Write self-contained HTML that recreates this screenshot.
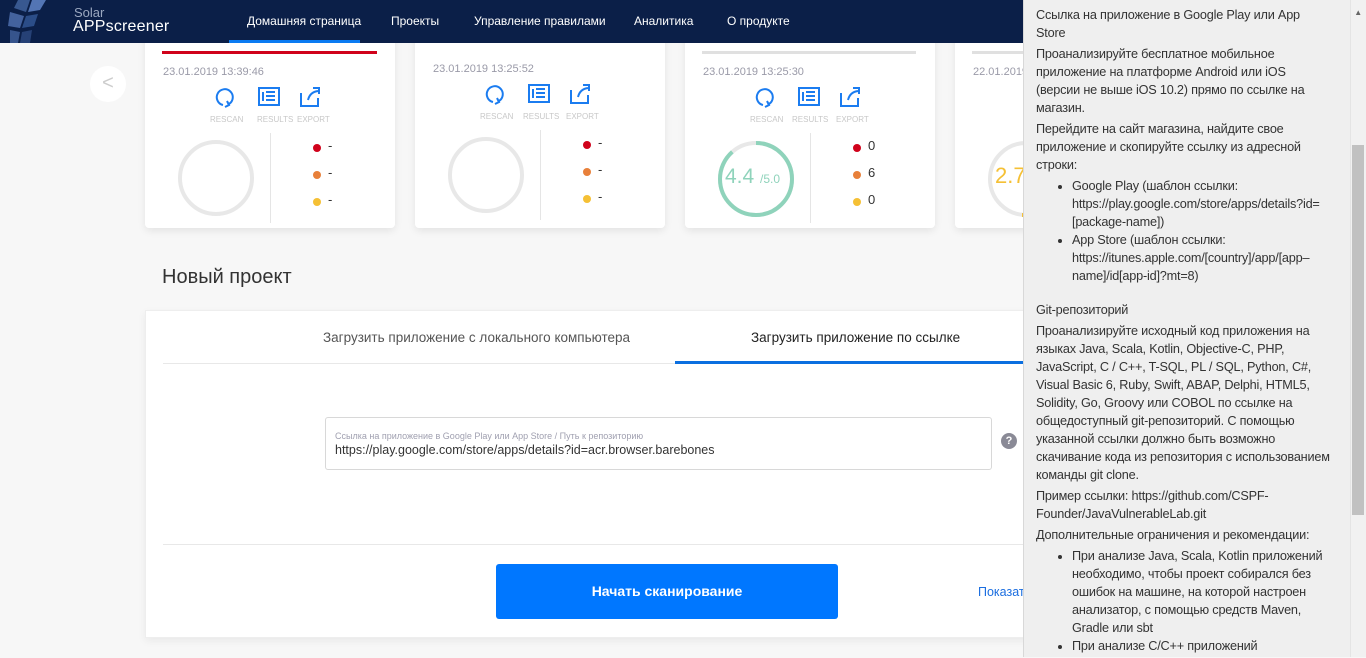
<!DOCTYPE html>
<html><head><meta charset="utf-8"><style>
*{box-sizing:border-box;margin:0;padding:0}
body{width:1366px;height:657px;overflow:hidden;background:#f7f7f7;font-family:"Liberation Sans",sans-serif;position:relative;color:#333}
.hdr{position:absolute;left:0;top:0;width:1366px;height:43px;background:#0b1f48;z-index:5}
.nav{position:absolute;top:14px;color:#fff;font-size:12px}
.card{position:absolute;top:20px;width:250px;height:208px;background:#fff;border-radius:4px;box-shadow:0 3px 8px rgba(0,0,0,.08)}
.date{position:absolute;left:18px;top:45px;font-size:11px;color:#9a9aa8}
.lbl{position:absolute;top:95px;font-size:8px;color:#c8c8c8}
.ic{position:absolute;top:65px}
.vd{position:absolute;left:125px;top:113px;width:1px;height:90px;background:#e5e5e5}
.dot{position:absolute;left:168px;width:8px;height:8px;border-radius:50%}
.dv{position:absolute;left:183px;font-size:13px;color:#333}
.panel{position:absolute;left:1023px;top:0;width:343px;height:657px;background:#efefef;border-left:1px solid #d8d8d8;font-size:12.7px;letter-spacing:-0.2px;line-height:18px;color:#333;z-index:10}
.panel .in{position:absolute;left:12px;top:6px;width:294px}
.panel p{margin-bottom:3px}
.panel ul{margin-left:36px;margin-bottom:3px}
</style></head><body>
<div class="hdr">
<svg width="70" height="43" style="position:absolute;left:0;top:0"><g fill="#3d5f98" opacity=".9"><path d="M18 0 L30 0 L26 12 L14 8Z"/><path d="M32 0 L46 0 L40 10 L28 12Z" fill="#5b7fc0"/><path d="M10 12 L24 16 L20 28 L8 26Z" fill="#4a6aa8"/><path d="M26 16 L38 14 L34 26 L22 28Z" fill="#2f5390"/><path d="M10 30 L20 32 L18 43 L10 43Z" fill="#3b5a94"/><path d="M22 32 L32 30 L30 43 L20 43Z" fill="#29457c"/></g></svg>
<div style="position:absolute;left:74px;top:5px;color:#9ba8c0;font-size:13px">Solar</div>
<div style="position:absolute;left:73px;top:18px;color:#fff;font-size:16px;letter-spacing:.2px">APPscreener</div>
<div class="nav" style="left:247px">Домашняя страница</div>
<div class="nav" style="left:391px">Проекты</div>
<div class="nav" style="left:474px">Управление правилами</div>
<div class="nav" style="left:634px">Аналитика</div>
<div class="nav" style="left:727px">О продукте</div>
<div style="position:absolute;left:229px;top:40px;width:131px;height:3px;background:#0b7bf2"></div>
</div>
<div style="position:absolute;left:90px;top:66px;width:36px;height:36px;border-radius:50%;background:#fff;color:#ccc;font-size:20px;text-align:center;line-height:34px">&lt;</div>

<div class="card" style="left:145px">
<div style="position:absolute;left:17px;top:31px;width:215px;height:3px;background:#d0021b"></div>
<div class="date" style="top:46px">23.01.2019 13:39:46</div>
<svg class="ic" style="left:68px" width="120" height="26"><g fill="none" stroke="#1b7cf0" stroke-width="2"><path d="M10 20 A8 8 0 1 1 16 19"/><path d="M14 16 L16 20 L12 22"/><rect x="46" y="3" width="20" height="17"/><path d="M50 7v9M53 7h9M53 11h9M53 15h9"/><path d="M88 8v13h17v-8M95 15q2-8 10-9M100 3h6v6"/></g></svg>
<div class="lbl" style="left:65px">RESCAN</div><div class="lbl" style="left:112px">RESULTS</div><div class="lbl" style="left:152px">EXPORT</div>
<div style="position:absolute;left:33px;top:120px;width:76px;height:76px;border:4px solid #e8e8e8;border-radius:50%"></div>
<div class="vd"></div>
<div class="dot" style="top:124px;background:#d0021b"></div><div class="dv" style="top:118px">-</div>
<div class="dot" style="top:151px;background:#e8803a"></div><div class="dv" style="top:145px">-</div>
<div class="dot" style="top:178px;background:#f5c035"></div><div class="dv" style="top:172px">-</div>
</div>
<div class="card" style="left:415px">
<div class="date" style="top:43px">23.01.2019 13:25:52</div>
<svg class="ic" style="left:68px;top:62px" width="120" height="26"><g fill="none" stroke="#1b7cf0" stroke-width="2"><path d="M10 20 A8 8 0 1 1 16 19"/><path d="M14 16 L16 20 L12 22"/><rect x="46" y="3" width="20" height="17"/><path d="M50 7v9M53 7h9M53 11h9M53 15h9"/><path d="M88 8v13h17v-8M95 15q2-8 10-9M100 3h6v6"/></g></svg>
<div class="lbl" style="left:65px;top:92px">RESCAN</div><div class="lbl" style="left:108px;top:92px">RESULTS</div><div class="lbl" style="left:151px;top:92px">EXPORT</div>
<div style="position:absolute;left:33px;top:117px;width:76px;height:76px;border:4px solid #e8e8e8;border-radius:50%"></div>
<div class="vd" style="top:110px"></div>
<div class="dot" style="top:121px;background:#d0021b"></div><div class="dv" style="top:115px">-</div>
<div class="dot" style="top:148px;background:#e8803a"></div><div class="dv" style="top:142px">-</div>
<div class="dot" style="top:175px;background:#f5c035"></div><div class="dv" style="top:169px">-</div>
</div>
<div class="card" style="left:685px">
<div style="position:absolute;left:17px;top:31px;width:214px;height:3px;background:#e0e0e0"></div>
<div class="date" style="top:46px">23.01.2019 13:25:30</div>
<svg class="ic" style="left:68px" width="120" height="26"><g fill="none" stroke="#1b7cf0" stroke-width="2"><path d="M10 20 A8 8 0 1 1 16 19"/><path d="M14 16 L16 20 L12 22"/><rect x="46" y="3" width="20" height="17"/><path d="M50 7v9M53 7h9M53 11h9M53 15h9"/><path d="M88 8v13h17v-8M95 15q2-8 10-9M100 3h6v6"/></g></svg>
<div class="lbl" style="left:65px">RESCAN</div><div class="lbl" style="left:107px">RESULTS</div><div class="lbl" style="left:151px">EXPORT</div>
<svg style="position:absolute;left:31px;top:119px" width="80" height="80"><circle cx="40" cy="40" r="36" fill="none" stroke="#e8e8e8" stroke-width="4"/><circle cx="40" cy="40" r="36" fill="none" stroke="#8fd3bb" stroke-width="4" stroke-dasharray="200 226" transform="rotate(-90 40 40)"/></svg>
<div style="position:absolute;left:40px;top:145px;font-size:21px;color:#8fd3bb">4.4 <span style="font-size:12px">/5.0</span></div>
<div class="vd"></div>
<div class="dot" style="top:124px;background:#d0021b"></div><div class="dv" style="top:118px">0</div>
<div class="dot" style="top:151px;background:#e8803a"></div><div class="dv" style="top:145px">6</div>
<div class="dot" style="top:178px;background:#f5c035"></div><div class="dv" style="top:172px">0</div>
</div>
<div class="card" style="left:955px">
<div style="position:absolute;left:17px;top:31px;width:214px;height:3px;background:#e0e0e0"></div>
<div class="date" style="top:46px">22.01.2019</div>
<svg style="position:absolute;left:31px;top:119px" width="80" height="80"><circle cx="40" cy="40" r="36" fill="none" stroke="#e8e8e8" stroke-width="4"/><path d="M36 76 A36 36 0 0 0 46 75" fill="none" stroke="#f5c035" stroke-width="4"/></svg>
<div style="position:absolute;left:40px;top:143px;font-size:22px;color:#f5c035">2.7</div>
</div>

<div style="position:absolute;left:162px;top:266px;font-size:20px;color:#333">Новый проект</div>
<div style="position:absolute;left:145px;top:310px;width:900px;height:328px;background:#fff;border:1px solid #eee;box-shadow:0 3px 8px rgba(0,0,0,.06)">
<div style="position:absolute;left:177px;top:19px;font-size:13.5px;color:#555">Загрузить приложение с локального компьютера</div>
<div style="position:absolute;left:605px;top:19px;font-size:13.5px;color:#222">Загрузить приложение по ссылке</div>
<div style="position:absolute;left:17px;top:52px;width:870px;height:1px;background:#e8e8e8"></div>
<div style="position:absolute;left:529px;top:50px;width:360px;height:3px;background:#0b6fe0"></div>
<div style="position:absolute;left:179px;top:106px;width:667px;height:53px;border:1px solid #d8d8d8;border-radius:3px">
<div style="position:absolute;left:9px;top:13px;font-size:9px;color:#a0a0b0">Ссылка на приложение в Google Play или App Store / Путь к репозиторию</div>
<div style="position:absolute;left:9px;top:25px;font-size:12.5px;color:#333">https://play.google.com/store/apps/details?id=acr.browser.barebones</div>
</div>
<div style="position:absolute;left:855px;top:122px;width:16px;height:16px;border-radius:50%;background:#8a8a96;color:#fff;font-size:11px;font-weight:bold;text-align:center;line-height:16px">?</div>
<div style="position:absolute;left:17px;top:233px;width:870px;height:1px;background:#e8e8e8"></div>
<div style="position:absolute;left:350px;top:253px;width:342px;height:55px;background:#0077ff;border-radius:3px;color:#fff;font-weight:bold;font-size:14px;text-align:center;line-height:55px">Начать сканирование</div>
<div style="position:absolute;left:832px;top:274px;font-size:12.5px;color:#1b6ee0">Показать</div>
</div>

<div class="panel"><div class="in">
<p>Ссылка на приложение в Google Play или App Store</p>
<p>Проанализируйте бесплатное мобильное приложение на платформе Android или iOS (версии не выше iOS 10.2) прямо по ссылке на магазин.</p>
<p>Перейдите на сайт магазина, найдите свое приложение и скопируйте ссылку из адресной строки:</p>
<ul><li>Google Play (шаблон ссылки: https://play.google.com/store/apps/details?id=[package-name])</li>
<li>App Store (шаблон ссылки: https://itunes.apple.com/[country]/app/[app–name]/id[app-id]?mt=8)</li></ul>
<p style="margin-top:16px">Git-репозиторий</p>
<p>Проанализируйте исходный код приложения на языках Java, Scala, Kotlin, Objective-C, PHP, JavaScript, C / C++, T-SQL, PL / SQL, Python, C#, Visual Basic 6, Ruby, Swift, ABAP, Delphi, HTML5, Solidity, Go, Groovy или COBOL по ссылке на общедоступный git-репозиторий. С помощью указанной ссылки должно быть возможно скачивание кода из репозитория с использованием команды git clone.</p>
<p>Пример ссылки: https://github.com/CSPF-Founder/JavaVulnerableLab.git</p>
<p>Дополнительные ограничения и рекомендации:</p>
<ul><li>При анализе Java, Scala, Kotlin приложений необходимо, чтобы проект собирался без ошибок на машине, на которой настроен анализатор, с помощью средств Maven, Gradle или sbt</li><li>При анализе C/C++ приложений</li></ul>
</div>
<div style="position:absolute;right:0;top:0;width:16px;height:657px;background:#f1f1f1;border-left:1px solid #e4e4e4"></div>
<div style="position:absolute;right:2px;top:145px;width:12px;height:370px;background:#c1c1c1"></div>
<div style="position:absolute;right:4px;top:4px;font-size:8px;color:#666">▲</div>
</div>
</body></html>
